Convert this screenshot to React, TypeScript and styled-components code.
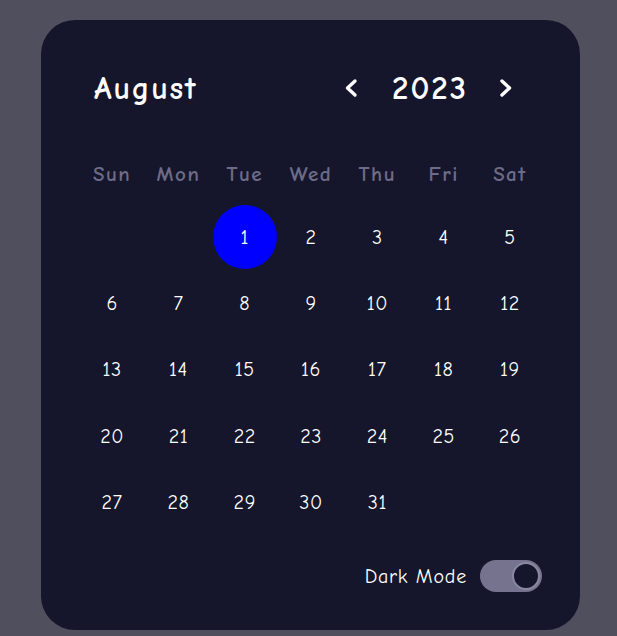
import React, { useState } from 'react';
import styled, { createGlobalStyle } from 'styled-components';

const GlobalStyle = createGlobalStyle`
  html, body {
    margin: 0;
    padding: 0;
    background-color: #504f5e;
  }
  body {
    font-family: 'Comic Sans MS', 'Comic Neue', 'Open Sans', sans-serif;
  }
`;

const Page = styled.div`
  display: flex;
  justify-content: flex-start;
  padding: 20px 0 6px 41px;
  min-height: 100vh;
  box-sizing: border-box;
`;

const Card = styled.div`
  width: 539px;
  height: 610px;
  box-sizing: border-box;
  background-color: #15162b;
  border-radius: 34px;
  padding: 48px 37px 38px 38px;
  display: flex;
  flex-direction: column;
`;

const Header = styled.div`
  display: flex;
  align-items: center;
  justify-content: space-between;
  height: 40px;
  padding: 0 30px 0 15px;
`;

const Month = styled.div`
  color: #ffffff;
  font-size: 32px;
  font-weight: 700;
  letter-spacing: 1.8px;
`;

const YearNav = styled.div`
  display: flex;
  align-items: center;
`;

const Year = styled.div`
  color: #ffffff;
  font-size: 33px;
  font-weight: 700;
  letter-spacing: 2px;
  margin: 0 31px 0 34px;
`;

const Arrow = styled.button`
  background: none;
  border: none;
  padding: 0;
  display: flex;
  align-items: center;
  cursor: pointer;
`;

const Grid = styled.div`
  margin-top: 36px;
  display: grid;
  grid-template-columns: repeat(7, 66.3px);
  grid-template-rows: 60px repeat(5, 66.3px);
`;

const WeekDay = styled.div`
  display: flex;
  align-items: center;
  justify-content: center;
  color: #6d6c88;
  font-size: 21px;
  font-weight: 700;
  letter-spacing: 1.5px;
`;

const Day = styled.div<{ $active?: boolean }>`
  display: flex;
  align-items: center;
  justify-content: center;
  color: #ffffff;
  font-size: 20px;
  letter-spacing: 0.6px;
  span {
    width: 64px;
    height: 64px;
    border-radius: 50%;
    display: flex;
    align-items: center;
    justify-content: center;
    background-color: ${(p) => (p.$active ? '#0000ff' : 'transparent')};
  }
`;

const Footer = styled.div`
  margin-top: auto;
  display: flex;
  align-items: center;
  justify-content: flex-end;
  gap: 13px;
  padding-right: 1px;
`;

const Label = styled.span`
  color: #ffffff;
  font-size: 20px;
  letter-spacing: 0.8px;
`;

const Toggle = styled.button<{ $on: boolean }>`
  width: 62px;
  height: 32px;
  border-radius: 16px;
  border: none;
  background-color: #76738f;
  padding: 2px;
  display: flex;
  justify-content: ${(p) => (p.$on ? 'flex-end' : 'flex-start')};
  cursor: pointer;
`;

const Knob = styled.span`
  width: 24px;
  height: 24px;
  border-radius: 50%;
  background-color: #15162b;
  border: 2px solid #8a87a3;
`;

const weekdays = ['Sun', 'Mon', 'Tue', 'Wed', 'Thu', 'Fri', 'Sat'];

const Chevron = ({ dir }: { dir: 'left' | 'right' }) => (
  <svg width="14" height="20" viewBox="0 0 14 20">
    <polyline
      points={dir === 'left' ? '11,3 3.5,10 11,17' : '3,3 10.5,10 3,17'}
      fill="none"
      stroke="#ffffff"
      strokeWidth="3.4"
      strokeLinecap="round"
      strokeLinejoin="round"
    />
  </svg>
);

export default function App() {
  const [dark, setDark] = useState(true);
  const first = 2; // August 1 2023 is a Tuesday
  const cells: (number | null)[] = [];
  for (let i = 0; i < first; i++) cells.push(null);
  for (let d = 1; d <= 31; d++) cells.push(d);

  return (
    <>
      <GlobalStyle />
      <Page>
        <Card>
          <Header>
            <Month>August</Month>
            <YearNav>
              <Arrow><Chevron dir="left" /></Arrow>
              <Year>2023</Year>
              <Arrow><Chevron dir="right" /></Arrow>
            </YearNav>
          </Header>
          <Grid>
            {weekdays.map((w) => (
              <WeekDay key={w}>{w}</WeekDay>
            ))}
            {cells.map((d, i) => (
              <Day key={i} $active={d === 1}>
                {d !== null && <span>{d}</span>}
              </Day>
            ))}
          </Grid>
          <Footer>
            <Label>Dark Mode</Label>
            <Toggle $on={dark} onClick={() => setDark(!dark)}>
              <Knob />
            </Toggle>
          </Footer>
        </Card>
      </Page>
    </>
  );
}
